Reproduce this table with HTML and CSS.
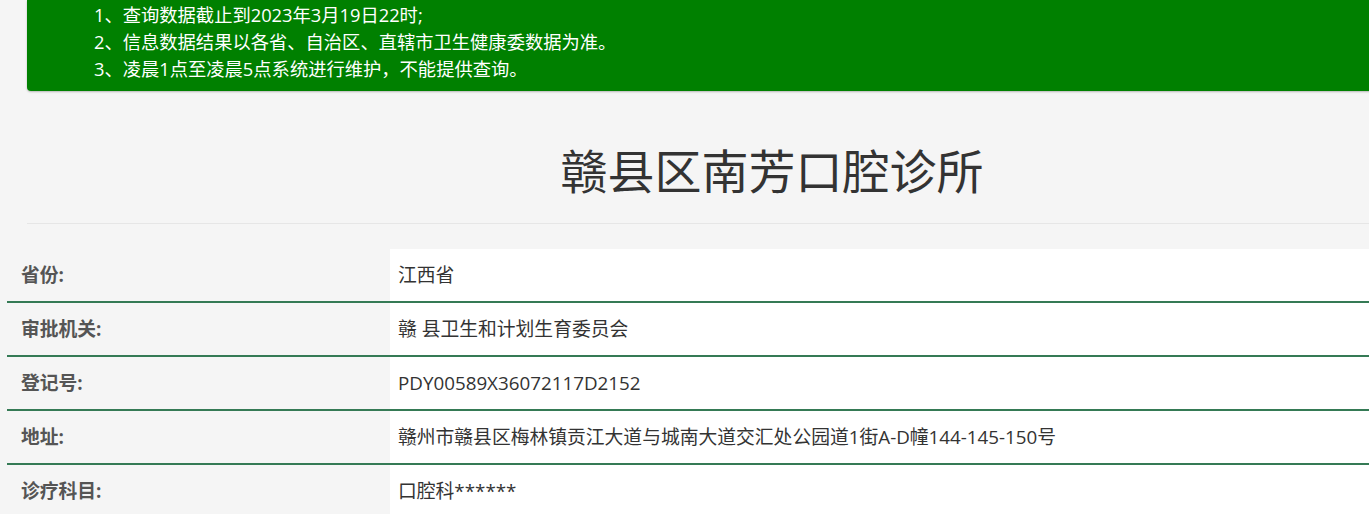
FILE: index.html
```html
<!DOCTYPE html>
<html lang="zh-CN">
<head>
<meta charset="utf-8">
<title>赣县区南芳口腔诊所</title>
<link rel="stylesheet" href="styles.css">
</head>
<body>
<div class="page">
  <div class="notice">
    <p>1、查询数据截止到2023年3月19日22时;</p>
    <p>2、信息数据结果以各省、自治区、直辖市卫生健康委数据为准。</p>
    <p>3、凌晨1点至凌晨5点系统进行维护，不能提供查询。</p>
  </div>
  <h1 class="title">赣县区南芳口腔诊所</h1>
  <table class="info">
    <tr><th>省份:</th><td>江西省</td></tr>
    <tr><th>审批机关:</th><td>赣 县卫生和计划生育委员会</td></tr>
    <tr><th>登记号:</th><td>PDY00589X36072117D2152</td></tr>
    <tr><th>地址:</th><td>赣州市赣县区梅林镇贡江大道与城南大道交汇处公园道1街A-D幢144-145-150号</td></tr>
    <tr><th>诊疗科目:</th><td>口腔科******</td></tr>
  </table>
</div>
</body>
</html>
```

FILE: styles.css
```css
html, body {
  margin: 0;
  padding: 0;
  background: #f5f5f5;
  overflow: hidden;
}
body {
  font-family: "Open Sans", "Noto Sans CJK SC", sans-serif;
  color: #333;
}
.page {
  width: 1600px;
}
.notice {
  margin-left: 27px;
  width: 1490px;
  box-sizing: border-box;
  background: #008000;
  color: #fff;
  border-radius: 0 0 4px 4px;
  box-shadow: 0 1px 2px rgba(0, 0, 0, 0.25);
  padding: 1px 0 9px 67px;
}
.notice p {
  margin: 0;
  font-size: 18.3px;
  line-height: 27px;
}
.title {
  margin: 0 0 0 27px;
  width: 1490px;
  text-align: center;
  font-size: 47px;
  font-weight: normal;
  color: #333;
  line-height: 1;
  padding: 57px 0 0;
  height: 75px;
  border-bottom: 1px solid #e6e6e6;
}
.info {
  margin: 25px 0 0 7px;
  width: 1593px;
  border-collapse: collapse;
}
.info th, .info td {
  height: 52px;
  padding: 0;
  border-bottom: 2px solid #357a55;
  font-size: 18.8px;
  line-height: 1.3;
  vertical-align: middle;
  text-align: left;
}
.info th {
  width: 369px;
  padding-left: 14px;
  font-weight: bold;
  color: #555;
  background: transparent;
}
.info td {
  padding-left: 8px;
  background: #fff;
  color: #333;
}
```
